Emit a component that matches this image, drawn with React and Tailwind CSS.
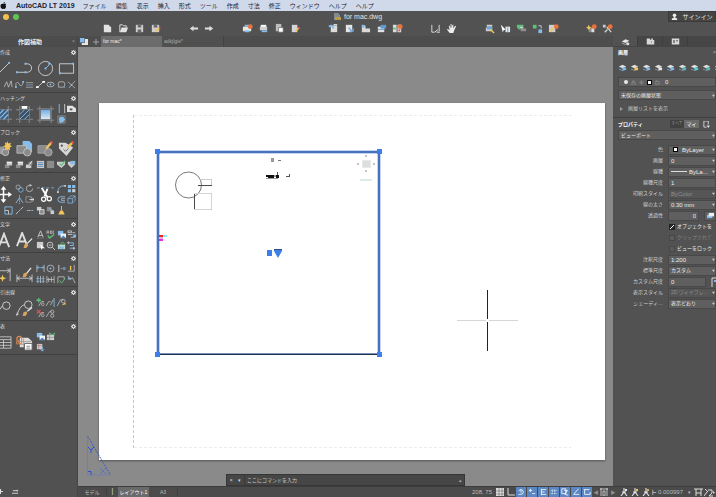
import clsx from 'clsx';

const G = '#cdcdcd'; // light strokes
const B = '#86bcea'; // accent blue
const O = '#e8743b'; // badge orange
const Y = '#f2c45a';
const N = '#5ec27c';
const D = '#8b8b8b';

// Small tool glyphs, drawn on a 10x10 grid
const SMALL = {
  spline: <path d="M0 8 3 2 5 8 8 1 9 8" stroke={G} fill="none" strokeWidth=".8" />,
  spline2: <><path d="M1 8V4Q3 1 5 5T9 3" stroke={G} fill="none" strokeWidth=".8" /><path d="M8 1h2v2H8zM0 7h2v2H0z" fill={B} /></>,
  mline: <><path d="M1 3h8M1 8h8" stroke={G} strokeWidth=".7" /><path d="M1 5.5h8" stroke={B} strokeWidth=".7" /></>,
  ray: <><path d="M2 8 8 2" stroke={G} /><path d="M0 7h3v2H0zM7 1h3v2H7z" fill="#fff" /></>,
  ellipse: <><ellipse cx="5" cy="5" rx="4" ry="2.6" stroke={G} fill="none" strokeWidth=".8" /><circle cx="5" cy="5" r="1" fill={B} /></>,
  roundrect: <><rect x="1.5" y="2" width="7" height="6" rx="2" stroke={G} fill="none" strokeWidth=".8" /><path d="M1 8h1M8 8h1" stroke={B} /></>,
  cross: <><path d="M1 2 9 9M2 9 9 1" stroke={G} strokeWidth=".7" /><circle cx="5" cy="5.4" r="1" fill={B} /></>,
  bars: <><path d="M2.5 0v10" stroke={B} /><path d="M8.5 0v10" stroke={G} /></>,
  tag: <><path d="M0 2h6l4 3v4H0z" fill="#e4e4e4" /><path d="M3 5h3v2H3z" fill="#555" /></>,
  bubble: <><path d="M1 1h8v8H1z" fill="none" stroke={D} /><path d="M3 2h4l2 3-2 3-4 1-1-4z" fill={B} /></>,
  blocks: <><path d="M1 5h5v4H1z" fill={D} /><path d="M3 2h6v4H3z" fill={G} /><path d="M3 2.500h6" stroke="#fff" /></>,
  blockPen: <><path d="M1 5h6v4H1z" fill={G} /><circle cx="6" cy="4" r="2.4" fill={D} /><path d="M5 5 8 1" stroke="#fff" /></>,
  list: <><path d="M1 1h8v8H1z" fill={G} /><path d="M2 3h6M2 5h6M2 7h6" stroke="#5285bd" /></>,
  fill: <path d="M1.5 1.5h7v7h-7z" fill={D} stroke="#aaa" strokeWidth=".6" />,
  check: <><path d="M0 2h9v3L5 9 0 5z" fill={G} /><path d="m3 4 2 2 4-5" stroke={N} fill="none" strokeWidth="1.4" /></>,
  checkBlue: <><path d="M1 2h8v3L5 9 1 5z" fill={G} /><path d="M4 1h5v4H4z" fill={B} /></>,
  sync: <><path d="M1 2h6M7 2v3H3M3 8h6" stroke={B} fill="none" /><path d="M2 4 0 2l2-2M7 6l2 2-2 2" fill={G} /></>,
  copy: <><circle cx="3.5" cy="3.5" r="2.4" stroke={G} fill="none" strokeWidth=".7" /><circle cx="6.5" cy="6.5" r="2.6" stroke={B} fill="none" strokeWidth=".8" /></>,
  rotate: <><path d="M8.5 5A3.5 3.5 0 1 1 5 1.5" stroke={G} fill="none" strokeWidth=".8" /><path d="M5 0v3l3-1.5z" fill={G} /></>,
  mirror: <><path d="M5 0v10" stroke={G} strokeWidth=".7" strokeDasharray="2 1" /><path d="M5 3 1 9M5 3l4 6" stroke={B} /></>,
  stretch: <><path d="M1 2h6v6H1z" stroke={G} fill="none" strokeDasharray="1 1" /><path d="M5 5h5M8 3l2 2-2 2" stroke="#fff" fill="none" strokeWidth=".8" /></>,
  arc: <><path d="M1 9Q1 2 8 2" stroke={B} fill="none" /><path d="M0 8h2v2H0zM8 1h2v2H8z" fill={G} /></>,
  array: <><path d="M1 1h3.5v3.5H1zM5.7 1h3.5v3.5H5.7zM1 5.7h3.5v3.5H1z" fill={B} /><path d="M5.7 5.7h3.5v3.5H5.7z" fill={G} /></>,
  offset: <><path d="M9 2H4a3 3 0 0 0 0 6h5" stroke={B} fill="none" /><path d="M9 4H5v2h4" stroke={G} fill="none" strokeWidth=".7" /></>,
  box: <path d="M1 4h5v5H1zM1 4l3-3h5v5L6 9M6 4l3-3" stroke={B} fill="none" strokeWidth=".8" />,
  scale: <><path d="M1 1h8v8H1z" stroke={B} fill="none" /><path d="M1 5h4v4" stroke={G} fill="none" /></>,
  trim: <><path d="M1 9 4 6M6 4l3-3" stroke={G} /><path d="m4 6 2-2" stroke={B} /></>,
  dash: <><path d="M2 5h2M7 5h2" stroke={B} /><path d="M4 4.500h2v1H4z" fill={G} /></>,
  swap: <><path d="M1 1h5v4H1z" fill={G} /><path d="M4 4h5v5H4z" fill={D} stroke="#fff" strokeWidth=".7" /></>,
  swapBlue: <><path d="M1 1h5v5H1z" fill={D} /><path d="M3 3q5 0 5 5" stroke={B} fill="none" /><path d="M5 5h4v4H5z" fill={G} /></>,
  broom: <><path d="M5 0v5" stroke={Y} /><path d="M3.5 5h3l2 4.500h-7z" fill={Y} /></>,
  textA: <><path d="M2 8 5 1l3 7M3 6h4" stroke={G} fill="none" /><path d="M1 9h8" stroke={D} strokeWidth=".7" /></>,
  spell: <><path d="M1 4V1h2v3M1 3h2M5 1h1.500v3H5zM9 1H8v3h1" stroke={G} fill="none" strokeWidth=".7" /><path d="m2 6 2 3 5-4" stroke={N} fill="none" strokeWidth="1.500" /></>,
  pictures: <><path d="M1 1h6v5H1z" fill={B} /><path d="M4 4h6v5H4z" fill="#f1f1f1" /><path d="m4 9 3-3 3 3z" fill="#4a86c6" /></>,
  convert: <><path d="M1 1h4v2H1zM6 3h3M1 5h5M4 8h5" stroke={G} fill="none" strokeWidth=".9" /><path d="M7 5h3v3H7z" fill={B} /></>,
  select: <><path d="M1 1h7v7H1z" fill={G} /><path d="m5 4 5 4H7l-1 2z" fill="#fff" /></>,
  search: <><circle cx="4.500" cy="4.500" r="3.200" stroke={G} fill="none" /><path d="m7 7 3 3M3 4.500h3" stroke={G} /></>,
  import: <><path d="M1 4h8v5H1z" fill="#c8dfd0" /><path d="m3 5 3-4 3 3" stroke={N} fill="none" /><path d="M2 6h6v3H2z" fill={B} /></>,
  dimLin: <><path d="M1 1v8M9 1v8" stroke={G} strokeWidth=".8" /><path d="M1 4h8M3 2.500 1 4l2 1.500M7 2.500 9 4 7 5.500" stroke={B} fill="none" strokeWidth=".8" /></>,
  dimRad: <><circle cx="5" cy="5" r="3.800" stroke={G} fill="none" strokeWidth=".8" /><circle cx="5" cy="5" r="1" fill={B} /></>,
  dimOrd: <><path d="M2 1v8" stroke={G} /><path d="M4 5h2M7 4h2v2H7z" stroke={B} fill="none" strokeWidth=".8" /></>,
  dimBase: <><path d="M8 1v7H1" stroke={G} fill="none" strokeWidth=".8" /><path d="M4 2v5" stroke={Y} strokeWidth="1.500" /></>,
  dimCont: <><path d="M2 1v8M5 1v8M8 1v8" stroke={G} strokeWidth=".8" /><path d="M0 4h10M0 7h10" stroke={B} strokeWidth=".7" /></>,
  dimSpace: <path d="M1 1v8M9 1v8M3 3v5M6 2v6M1 5h8" stroke={G} strokeWidth=".8" />,
  dimOk: <><path d="M1 9V2h7v3" stroke={G} fill="none" strokeWidth=".8" /><path d="m3 6 2 3 4-5" stroke={N} fill="none" /></>,
  dimJog: <><path d="M1 1 4 5 6 3l3 6" stroke={G} fill="none" strokeWidth=".8" /><path d="M1 3h3v2H1z" fill={B} /></>,
  leadAdd: <><path d="M3 0v5M.5 2.500h5" stroke={N} strokeWidth="1.400" /><path d="M3 9 6 4h3" stroke={G} fill="none" strokeWidth=".8" /><circle cx="7.500" cy="7" r="1.500" stroke={G} fill="none" strokeWidth=".7" /></>,
  leadDel: <><path d="m1 1 4 4M5 1 1 5" stroke="#e05151" strokeWidth="1.400" /><path d="M3 9 6 4h3" stroke={G} fill="none" strokeWidth=".8" /><circle cx="7.500" cy="7" r="1.500" stroke={G} fill="none" strokeWidth=".7" /></>,
  leadAlign: <><path d="m0 9 3-5h2M5 8l3-6" stroke={G} fill="none" strokeWidth=".8" /><path d="M9 0v10" stroke={B} /></>,
  leadJoin: <><path d="m0 9 4-7h3" stroke={G} fill="none" strokeWidth=".8" /><circle cx="7" cy="3.500" r="2" stroke={G} fill="none" strokeWidth=".8" /><path d="m5 8 4-3 1 2z" fill={Y} /></>,
  leadCol: <><path d="m0 9 4-6h2" stroke={G} fill="none" strokeWidth=".8" /><circle cx="7" cy="3" r="1.800" stroke={G} fill="none" strokeWidth=".8" /><circle cx="7" cy="7.500" r="1.800" stroke={G} fill="none" strokeWidth=".8" /></>,
  tblUp: <><path d="M1 3h8v6H1z" fill={G} /><path d="M1 6h8M4 3v6" stroke="#777" strokeWidth=".6" /><path d="M4 4V1l3 2 3-2v3" stroke={N} fill="none" /></>,
  tblDown: <><path d="M1 1h6v6H1z" fill={G} /><path d="M1 3h6M3 1v6" stroke="#a66" strokeWidth=".6" /><path d="M7 4v5L5 7M7 9l2-2" stroke={B} fill="none" /></>,
  gear: <><circle cx="5" cy="5" r="3" fill="none" stroke="#f0f0f0" strokeWidth="2.400" /><path d="M5 0v2M5 8v2M0 5h2M8 5h2M1.500 1.500l1.500 1.500M7 7l1.500 1.500M8.500 1.500 7 3M3 7 1.500 8.500" stroke="#f0f0f0" strokeWidth="1.600" /></>,
};

// Large tool glyphs, drawn on an 18x18 grid
const LARGE = {
  line: <><path d="M2 16 15 3" stroke={G} /><path d="M14 2h2v2h-2z" fill={B} /></>,
  pline: <><path d="M1 13h11a4.500 4.500 0 0 0 0-9h-2" stroke={G} fill="none" /><path d="M0 12h2v2H0zM9 3h2v2H9zM9 12h2v2H9z" fill={B} /></>,
  circle: <><circle cx="9" cy="9" r="7.500" stroke={G} fill="none" /><path d="m9 9 4-4" stroke={B} /><path d="M8 8h2v2H8zM12 3h2v2h-2z" fill={B} /></>,
  rect: <><path d="M1.500 4h15v10h-15z" stroke={G} fill="none" /><path d="M1 13h2v2H1zM15 3h2v2h-2z" fill={B} /></>,
  hatch: <><path d="M4 0v18M14 0v18M0 4h18M0 14h18" stroke={D} /><path d="M4 4h10v10H4z" fill="#3f5f80" /><path d="m4 9 5-5M4 14 14 4M9 14l5-5" stroke={B} strokeWidth="1.300" /></>,
  hatchTop: <><path d="M4 0v18M14 0v18M0 4h18M0 14h18" stroke={D} /><path d="M4 4h10v10H4z" fill="#3f4f62" /><path d="m4 9 5-5M4 14 14 4M9 14l5-5" stroke={B} /><path d="M6 0h6v3H6z" fill="#fff" /></>,
  gradient: <><defs><linearGradient id="grad" x2="0" y2="1"><stop stopColor="#6eaee6" /><stop offset="1" stopColor="#dfeaf5" /></linearGradient></defs><path d="M3 0v18M15 0v18M0 3h18M0 15h18" stroke={D} /><path d="M4 4h10v10H4z" fill="url(#grad)" /></>,
  blockNew: <><path d="M2 7h8v8H2z" fill="#9b9b9b" /><circle cx="11" cy="13" r="3.600" fill={D} stroke={G} strokeWidth=".8" /><path d="m13 1 1.200 2.800L17 3l-1 2.500L18 7l-2.500 1L16 11l-3-1.500L10.500 11l.5-3-2.500-1.500L11 5.500 10.500 2.500l2 1z" fill={Y} /></>,
  blockIns: <><path d="M7 1h7l3 3v9H7z" fill={B} /><path d="M1 6h10v8H1z" fill={D} stroke={G} strokeWidth=".8" /><circle cx="12" cy="13" r="4" fill={D} stroke={G} strokeWidth=".8" /></>,
  blockEdit: <><path d="M1 6h10v8H1z" fill={D} stroke="#aaa" strokeWidth=".8" /><circle cx="12" cy="13" r="4" fill={D} stroke="#bbb" strokeWidth=".8" /><path d="m10 9 5-6" stroke={Y} strokeWidth="2.500" /><path d="m14.500 3.500 1.500-2" stroke="#e25b45" strokeWidth="2.500" /></>,
  attr: <><path d="M1 3h7l8 5-7 9-8-8z" fill="#d8d8d8" /><circle cx="4" cy="6" r="1.200" fill="#555" /><path d="m6 10 2 2 3-3" stroke="#666" fill="none" /><path d="m10 8 5-5" stroke={Y} strokeWidth="2.500" /><path d="m14.500 3.500 1.500-2" stroke="#e25b45" strokeWidth="2.500" /></>,
  move: <><path d="M9 2v14M2 9h14" stroke="#fff" strokeWidth="1.600" /><path d="m9 0 3 4H6zM9 18l3-4H6zM0 9l4-3v6zM18 9l-4-3v6z" fill="#fff" /></>,
  scissors: <><path d="M0 2h18" stroke={B} strokeWidth=".8" strokeDasharray="3 2" /><path d="m5 2 6 10M11 3 8 11" stroke="#fff" strokeWidth="2" /><circle cx="7" cy="14" r="2.200" stroke="#fff" fill="none" strokeWidth="1.300" /><circle cx="13" cy="13.500" r="2.200" stroke="#fff" fill="none" strokeWidth="1.300" /></>,
  bigA: <path d="M4 16 9.500 2 15 16M6 11h7" stroke="#dedede" fill="none" strokeWidth="2" />,
  brushA: <><path d="M1 15 6.500 1 12 15M3 10h7" stroke="#dedede" fill="none" strokeWidth="2" /><path d="m12 12 5-5" stroke="#eee" strokeWidth="1.300" /><path d="m8 17 1-4 3-1 1 2-2 3z" fill="#d9a35f" /></>,
  dim: <><path d="M2 2v14M16 2v14M2 5h14M5 3 2 5l3 2M13 3l3 2-3 2" stroke={G} fill="none" strokeWidth=".9" /><path d="m8 9 1 3 3 1-3 1-1 3-1-3-3-1 3-1z" fill={Y} /></>,
  dimBrush: <><path d="M1 9v8M17 9v8M1 13h16M4 11l-3 2 3 2M14 11l3 2-3 2" stroke={G} fill="none" strokeWidth=".9" /><path d="m11 8 5-6" stroke="#eee" strokeWidth="1.300" /><path d="m7 12 1-4 3-1 1 2-2 3z" fill="#d9a35f" /></>,
  leader: <><path d="M2 14 8 6" stroke={G} /><circle cx="12" cy="6" r="4" stroke={G} fill="none" /></>,
  leadBrush: <><path d="M1 16Q4 6 9 5" stroke={G} fill="none" /><circle cx="13" cy="5" r="4" stroke={G} fill="none" /><path d="m0 17 1-4 2 2z" fill={G} /><path d="m12 12 5-4" stroke="#eee" strokeWidth="1.300" /><path d="m7 17 1-4 3-1 1 2-2 3z" fill="#d9a35f" /></>,
  table: <path d="M1 3h16v12H1zM1 6h16M1 9h16M1 12h16M9 6v9" stroke={G} fill="none" strokeWidth=".9" />,
  linkTable: <><path d="M4 4h9l4 4v6H4z" fill="#dedede" /><path d="M4 8h12M4 11h12M8 5v9" stroke="#999" strokeWidth=".8" /><path d="M1 11V5a2.500 2.500 0 0 1 5 0v4a1.500 1.500 0 0 1-3 0V6" stroke="#e08a4e" fill="none" strokeWidth="1.300" /><path d="M9 10h8v7H9z" fill="#fff" stroke="#666" /><path d="M11 13h4M11 15h4" stroke="#666" strokeWidth=".8" /></>,
};

// Toolbar glyphs, drawn on a 12x12 grid
const badge = <circle cx="9" cy="4" r="2.600" fill={O} />;
const BAR = {
  new: <path d="M2 2h5l3 3v5H2z" fill="#e2e2e2" />,
  open: <><path d="M2 10V2h3l1 1h3v2" stroke="#e2e2e2" fill="none" /><path d="m2 10 2-5h7l-2 5z" fill="#e2e2e2" /></>,
  save: <><path d="M2 2h8v8H2z" fill="#cfcfcf" /><path d="M4 2h4v3H4zM4 7h4v3H4z" fill="#6a6a6a" /></>,
  saveAs: <><path d="M2 2h8v8H2z" fill="#cfcfcf" /><path d="M4 2h4v3H4z" fill="#6a6a6a" /><path d="m6 9 4-3" stroke={Y} strokeWidth="2" /><path d="m10 6 1-1" stroke="#e25b45" strokeWidth="2" /></>,
  undo: <path d="m2 6 4-3v2h5v2H6v2z" fill="#dedede" />,
  redo: <path d="M10 6 6 3v2H1v2h5v2z" fill="#dedede" />,
  plot: <><path d="M1 4h9v5H1z" fill="#e8e8e8" /><path d="M3 2h5v2H3zM3 8h5v2H3z" fill={B} />{badge}</>,
  print: <><path d="M3 2h6v3H3z" fill="#fff" /><path d="M2 4h8v4H2z" fill="#cfcfcf" /><path d="M4 8h6v2H4z" fill={B} /></>,
  page: <><path d="M2 1h6v8H2z" fill="#bdbdbd" /><path d="M5 5h5v5H5z" fill="#fff" stroke="#666" strokeWidth=".7" /></>,
  pagePen: <><path d="M2 2h6v8H2z" fill="#d6d6d6" /><path d="m6 9 4-4" stroke={Y} strokeWidth="1.800" /><path d="m9 6 1-1" stroke="#e25b45" strokeWidth="2" /></>,
  sheet: <><path d="M3 3h7v7H3z" fill="#dcdcdc" /><path d="M10 2H6" stroke="#eee" strokeWidth="1.500" /><path d="M1 4q4-3 5 2" stroke={B} fill="none" strokeWidth="2" /></>,
  sheetIn: <><path d="M2 2h7v8H2z" fill="#e6e6e6" /><path d="m5 5 4 4M6 9h4V6" stroke="#6aa7dc" fill="none" strokeWidth="1.300" /></>,
  folder: <><path d="M2 2v8h9V6H6V3z" fill="#d9d9d9" /><path d="M2 2h3v3H2z" fill={B} /></>,
  refs: <><path d="M2 4h7v6H2z" fill="#e2e2e2" /><path d="M5 2h6v4H5z" fill="#5f9ad2" /><path d="M2 7h7" stroke="#5f9ad2" /></>,
  compare: <><path d="M1 2h4v8H1zM6 2h4v8H6z" fill="#dcdcdc" /><path d="M1 5h3v2H1z" fill={N} /><path d="M7 7h2v2H7z" fill="#e05151" />{badge}</>,
  region: <path d="M2 2v8h3M10 2v7M5 10l4-3M7 10h4" stroke="#e2e2e2" fill="none" />,
  hand: <path d="M4 11 1 7l1-.5L4 8 3 3h1l1 3V1h1v5l1-4h1v4l2-3 1 .5L9 8l-1 3z" fill="#ececec" />,
  props: <><path d="M3 2h6v2H3zM2 5h7v4H2z" fill="#cfcfcf" /><path d="M3 4h6v3H3z" fill="#6ba6db" /><path d="m7 7 4 4" stroke={Y} strokeWidth="1.500" /></>,
  quick: <><path d="m1 2 5 5-2 1-1 2z" fill="#fff" /><path d="M6 4h5v6H6z" fill="#e8e8e8" /><path d="M8 5h1v5H8z" fill="#58a0e0" /></>,
  group: <><path d="M1 2h7v2H4v4L1 5z" fill={N} /><path d="M5 6h6v3H5z" fill="#8e8e8e" /><path d="M4 4h4v2H4z" fill="#b9dcc4" /></>,
  ungroup: <><path d="M1 2h4v4H1z" fill={N} /><path d="M7 7h4v4H7z" fill={B} /><path d="M7 3h3v3" stroke={G} fill="none" /></>,
  measure: <><path d="M1 2h7v8H1z" fill="#cfcfcf" /><path d="m4 4 2 4-4 2z" fill={Y} />{badge}</>,
  star: <><path d="M3 5h6v5H3z" fill={D} /><path d="m3 2 1 2 2 1-2 1-1 2-1-2-2-1 2-1z" fill={Y} /><path d="M6 6h3v4H6z" fill="#ddd" />{badge}</>,
  tools: <><path d="m3 10 3-3M6 5l4 5" stroke="#cfcfcf" strokeWidth="1.500" /><path d="M1 2h3v3H1zM5 4h2v2H5z" fill="#ccc" />{badge}</>,
  layer: <><path d="m1 6 5-3 5 2-5 3z" fill="#e6e6e6" /><path d="m1 8 5 2 2-2" stroke="#bbb" fill="none" /><circle cx="9" cy="9" r="2" fill="#ddd" /></>,
  blocksTab: <><path d="M1 2h4l1 2h5v6H1z" fill="#d9d9d9" /><path d="M7 2h2v2H7z" fill="#eee" /><path d="M7 6h1v2H7z" fill="#777" /></>,
  sheetTab: <><path d="M1 2h10v8H1z" fill="#d9d9d9" /><path d="M3 4h2v4H3zM7 4h2v2H7z" fill="#666" /></>,
};

const TOOLBAR = [
  ['new', 'open', 'save', 'saveAs'],
  ['undo', 'redo'],
  ['plot', 'print', 'page', 'pagePen'],
  ['sheet', 'sheetIn', 'folder', 'refs', 'compare'],
  ['region', 'hand'],
  ['props', 'quick', 'group', 'ungroup', 'measure'],
  ['star', 'tools'],
];

const MENUS = ['ファイル', '編集', '表示', '挿入', '形式', 'ツール', '作成', '寸法', '修正', 'ウィンドウ', 'ヘルプ', 'ヘルプ'];

// "+name" takes a double cell, "" leaves a single cell empty
const SECTIONS = [
  { title: '作成', tools: ['+line', '+pline', '+circle', '+rect', '', 'spline', 'spline2', 'mline', 'ray', 'ellipse', 'roundrect', 'cross'] },
  { title: 'ハッチング', tools: ['+hatch', '+hatchTop', '+gradient', 'bars', 'tag', 'bubble'] },
  { title: 'ブロック', tools: ['+blockNew', '+blockIns', '+blockEdit', '+attr', '', 'blocks', 'blocks', 'blockPen', 'list', 'fill', 'check', 'checkBlue'] },
  { title: '修正', tools: ['+move', 'copy', 'rotate', '+scissors', 'arc', 'array', 'mirror', 'stretch', 'offset', 'box', '', 'scale', 'trim', 'dash', 'swap', 'swapBlue', 'broom'] },
  { title: '文字', tools: ['+bigA', '+brushA', 'textA', 'spell', 'pictures', 'convert', 'select', 'search', 'import', 'sync'] },
  { title: '寸法', tools: ['+dim', '+dimBrush', 'dimLin', 'dimRad', 'dimOrd', 'dimBase', 'dimCont', 'dimSpace', 'dimOk', 'dimJog'] },
  { title: '引出線', tools: ['+leader', '+leadBrush', 'leadAdd', 'leadAlign', 'leadJoin', '', 'leadDel', 'leadCol'] },
  { title: '表', tools: ['+table', '+linkTable', 'pictures', 'tblUp', '', '', 'tblDown'] },
];

const LAYER_COLORS = ['#7db8ec', '#f2c45a', '#7db8ec', '#e6e6e6', '#7db8ec', '#4fb9c4', '#4fd0dc', '#4fb9c4', '#f2c45a'];

function Tool({ name }) {
  if (!name) return <span />;
  const big = name.startsWith('+');
  const key = big ? name.slice(1) : name;
  return (
    <button aria-label={key} className={clsx('flex items-center justify-center', big && 'col-span-2 row-span-2')}>
      <svg viewBox={big ? '0 0 18 18' : '0 0 10 10'} className={big ? 'size-[17px]' : 'size-[9px]'}>
        {big ? LARGE[key] : SMALL[key]}
      </svg>
    </button>
  );
}

function ToolPalette() {
  return (
    <aside className="flex w-[78px] shrink-0 flex-col overflow-hidden border-r border-[#454545] bg-[#515151]">
      <div className="flex h-[11px] shrink-0 items-center justify-between bg-[#4c4c4c] pr-0.5 pl-[18px]">
        <h2 className="text-[6px] leading-none font-bold text-[#ececec]">作図補助</h2>
        <button aria-label="閉じる" className="text-[5px] leading-none text-[#999]">×</button>
      </div>
      <div className="-ml-[7px] w-[84px]">
        {SECTIONS.map(({ title, tools }) => (
          <section key={title} className="border-b border-[#404040] pb-px">
            <div className="flex h-2.5 items-center justify-between pr-px pl-[7px]">
              <h3 className="text-[5px] leading-[7px] text-[#dadada]">{title}</h3>
              <button aria-label={`${title}の設定`}>
                <svg viewBox="0 0 10 10" className="size-[5px]">{SMALL.gear}</svg>
              </button>
            </div>
            <div className="grid min-h-[22px] auto-rows-[11px] grid-cols-8">
              {tools.map((t, i) => <Tool key={i} name={t} />)}
            </div>
            {tools.length > 10 && <div className="h-px" />}
          </section>
        ))}
      </div>
      <div className="mt-auto flex h-[11px] items-center gap-[9px]">
        <button aria-label="追加">
          <svg viewBox="0 0 3 7" className="h-[7px] w-[3px]"><path d="M0 3.500h3M.5 1v5" stroke="#ddd" /></svg>
        </button>
        <button aria-label="一覧">
          <svg viewBox="0 0 8 8" className="size-[7px]"><path d="M1 3h6M0 6h7M6 2v2" stroke="#ddd" /></svg>
        </button>
      </div>
    </aside>
  );
}

function Canvas() {
  return (
    <main className="relative flex min-h-0 flex-1 bg-[#8a8a8a] pt-14 pr-2 pb-[26px] pl-[21px]">
      <div className="min-w-0 flex-1 bg-white shadow-[0_1px_2px_#555]">
        <svg viewBox="0 0 506 357" preserveAspectRatio="xMinYMin meet" className="size-full" shapeRendering="crispEdges">
          {/* Printable area */}
          <path d="M34.500 12v333" stroke="#c9c9c9" strokeDasharray="3 2" />
          <path d="M35 12.500h437M35 344.500h437" stroke="#ececec" strokeDasharray="3 2" />

          {/* Viewport frame and grips */}
          <path d="M59 49v202M280 49v202M59 49h222" stroke="#c3d3f0" strokeWidth="4" />
          <path d="M59 251V49h221v202" fill="none" stroke="#4672c0" strokeWidth="2" />
          <path d="M58 251.500h223" stroke="#1d2f4b" strokeWidth="1" />
          <path d="M58 250.500h223" stroke="#7b93bb" strokeWidth="1" />
          <path d="M56 46h5v5h-5zM278 46h5v5h-5zM56 249h5v5h-5zM278 249h5v5h-5z" fill="#3c7eea" />

          {/* Model geometry */}
          <circle cx="89.500" cy="82" r="13" fill="none" stroke="#555" strokeWidth=".8" shapeRendering="auto" />
          <path d="M101 76.500h11.500v6" fill="none" stroke="#ccc" />
          <path d="M99 82.500h14M95.500 90v16" stroke="#4a4a4a" />
          <path d="M95 90.500h17.500v16H95" fill="none" stroke="#d4d4d4" />
          <path d="M172 55h3v4h-3z" fill="#999" />
          <path d="M179 57.500h3" stroke="#777" />
          <path d="M167 72h8v3h-6v-1h-2zM177 72h3v3h-3z" fill="#111" />
          <path d="M175 72h2v2h-2zM167 75h12v1h-12z" fill="#999" />
          <path d="M178.500 69v3" stroke="#555" />
          <path d="M187 73.500h4M190.500 71v3" stroke="#555" />

          {/* View cube */}
          <path d="M263 57h8v7h-8z" fill="#dcdfdf" stroke="#e9e9e9" />
          <path d="M266 52h2v2h-2zM266 67h2v2h-2zM258 60h2v2h-2zM274 60h2v2h-2z" fill="#c4c4c4" />
          <path d="M261 77h12" stroke="#dcebea" strokeWidth="2" />

          <path d="M60 132h4v2h-4z" fill="#f0271c" />
          <path d="M60 134h4v2h-4z" fill="#e8aee2" />
          <path d="M60 136h4v2h-4z" fill="#ee27e5" />
          <path d="M64 132h4v2h-4z" fill="#7df3f5" />
          <path d="M168 147h5v6h-5z" fill="#3c7eea" />
          <path d="M175 146h8v2l-4 7-4-7z" fill="#3c7eea" shapeRendering="auto" />
          <path d="M175 146.500h8" stroke="#2d4d83" />

          {/* Crosshair */}
          <path d="M388.500 187v29M388.500 219v29" stroke="#222" />
          <path d="M358 217.500h29M390 217.500h29" stroke="#d6d6d2" />
        </svg>
      </div>

      {/* UCS icon */}
      <svg viewBox="0 0 28 46" className="absolute bottom-[7px] left-2 h-[46px] w-7" fill="none">
        <path d="M1.500 3v39H24" stroke="#6b7fb4" strokeWidth=".8" />
        <path d="m1.500 3 23 39" stroke="#3c5dc6" strokeDasharray="2 1" />
        <path d="M2 38.500h3V42" stroke="#2452d8" />
        <path d="m2 14 3 3 3-3M5 17v3" stroke="#2452d8" />
        <path d="m14 35 6 6M20 35l-6 6" stroke="#5472bf" strokeWidth=".8" />
      </svg>

      {/* Command line */}
      <form className="absolute right-[148px] bottom-0 left-[148px] flex h-3 items-center border border-[#363636] bg-[#464646]" onSubmit={(e) => e.preventDefault()}>
        <span className="flex h-full w-[18px] items-center justify-around border-r border-[#393939] text-[5px] leading-none text-[#ddd]">
          <button type="button" aria-label="閉じる">×</button>
          <button type="button" aria-label="履歴">▾</button>
        </span>
        <input aria-label="コマンド" placeholder="ここにコマンドを入力" className="h-full min-w-0 flex-1 bg-transparent px-0.5 text-[5px] leading-none text-[#eee] outline-none placeholder:text-[#c8c8c8]" />
        <span className="pr-0.5 text-[5px] leading-none text-[#aaa]">▴</span>
      </form>
    </main>
  );
}

function Workspace() {
  return (
    <div className="flex min-w-0 flex-1 flex-col">
      <nav className="flex h-[11px] shrink-0 items-stretch bg-[#4d4d4d] text-[5px] leading-none text-[#aaa]">
        <button aria-label="スタート" className="flex w-3 items-center justify-center">
          <svg viewBox="0 0 9 9" className="size-2"><path d="M0 0h5v5H0z" fill={B} /><path d="M5.500 1H9v7H2V5.500h3.500z" fill="#e6e6e6" /></svg>
        </button>
        <button aria-label="新しいタブ" className="flex w-[11px] items-center justify-center">
          <svg viewBox="0 0 6 6" className="size-1.5"><path d="M3 0v6M0 3h6" stroke="#b5b5b5" strokeWidth=".8" /></svg>
        </button>
        <button className="w-[61px] bg-[#6c6c6c] pl-0.5 text-left text-[#eee]">for mac*</button>
        <button className="w-[62px] border-r border-[#424242] bg-[#505050] pl-0.5 text-left">adkjlgie*</button>
      </nav>
      <Canvas />
    </div>
  );
}

const field = 'flex h-2.5 items-center border border-[#484848] bg-[#5f5f5f] text-[6px] leading-none text-[#ececec]';

function Dropdown({ id, label, value, dim, swatch, line, jp, disabled }) {
  return (
    <span className={clsx(field, 'min-w-0 flex-1 gap-0.5 pl-0.5', disabled && 'bg-[#565656]')}>
      {swatch && <i className="mx-0.5 size-[5px] shrink-0 border border-black bg-white" />}
      {line && <i className="h-px w-4 shrink-0 bg-[#ddd]" />}
      <select id={id} aria-label={label} disabled={disabled} className={clsx('h-full min-w-0 flex-1 appearance-none truncate bg-transparent leading-none outline-none disabled:opacity-100', jp ? 'text-[5px]' : 'text-[6px]', dim && 'text-[#8e8e8e]')}>
        <option>{value}</option>
      </select>
      <svg viewBox="0 0 4 4" className="size-[3px] shrink-0"><path d="M0 1h4L2 4z" fill="#ccc" /></svg>
    </span>
  );
}

function Row({ label, id, children }) {
  return (
    <div className="flex h-[11px] items-center gap-[5px]">
      <label htmlFor={id} className="w-[50px] shrink-0 text-right text-[5px] leading-[7px] whitespace-nowrap text-[#d0d0d0]">{label}</label>
      {children}
    </div>
  );
}

function Check({ label, checked, disabled }) {
  return (
    <label className={clsx('ml-[56px] flex h-[11px] items-center gap-0.5 text-[5px] leading-[7px] whitespace-nowrap', disabled ? 'text-[#858585]' : 'text-[#ececec]')}>
      <input
        type="checkbox"
        defaultChecked={checked}
        disabled={disabled}
        className="size-1.5 shrink-0 appearance-none border border-[#474747] bg-[#5b5b5b] checked:border-[#222] checked:bg-[#2b2b2b] checked:bg-[linear-gradient(135deg,transparent_45%,#fff_45%,#fff_60%,transparent_60%)]"
      />
      {label}
    </label>
  );
}

function Inspector() {
  return (
    <aside className="flex w-[103px] shrink-0 flex-col overflow-hidden bg-[#525252]">
      <div className="flex h-[11px] shrink-0 border-b border-[#454545] bg-[#464646]">
        {['layer', 'blocksTab', 'sheetTab'].map((n, i) => (
          <button key={n} aria-label={n} className={clsx('flex w-[25px] items-center justify-center border-r border-[#3e3e3e]', i === 0 && 'bg-[#525252]')}>
            <svg viewBox="0 0 12 12" className="size-[9px]">{BAR[n]}</svg>
          </button>
        ))}
      </div>

      {/* Layers */}
      <section className="border-b border-[#3f3f3f] pl-[5px]">
        <div className="flex h-[10px] items-center justify-between">
          <h2 className="text-[5px] leading-[7px] font-bold text-white">画層</h2>
          <span className="text-[5px] leading-none text-[#aaa]">×</span>
        </div>
        <div className="flex h-5 items-center">
          {LAYER_COLORS.map((c, i) => (
            <button key={i} aria-label={`画層ツール ${i + 1}`} className="flex w-3 shrink-0 items-center">
              <svg viewBox="0 0 10 10" className="size-[9px]">
                <path d="m1 4 4-2 4 2-4 2z" fill="#dedede" />
                <path d="m1 6 4 2 4-2v1L5 9 1 7z" fill={i % 4 ? '#9aa0a6' : c} />
                <path d="M5 5h4v3H5z" fill={c} />
              </svg>
            </button>
          ))}
        </div>
        <div className={clsx(field, 'gap-[3px] pl-[5px]')}>
          <i className="size-1 rounded-full bg-[#e8e8e8]" />
          <svg viewBox="0 0 6 6" className="size-[5px]"><path d="M1 3h4v3H1zM2 3V1h2v2" fill="none" stroke="#888" /></svg>
          <svg viewBox="0 0 6 6" className="size-[5px]"><path d="M3 0v6M0 3h6M1 1l4 4M5 1 1 5" stroke="#888" strokeWidth=".7" /></svg>
          <i className="size-[5px] border border-black bg-white" />
          <svg viewBox="0 0 6 6" className="size-[5px]"><path d="M0 2h5v3H0zM2 0v2" fill="none" stroke="#888" /></svg>
          <span className="ml-0.5">0</span>
        </div>
        <div className="mt-[3px] flex">
          <Dropdown label="画層状態" value="未保存の画層状態" jp />
        </div>
        <button className="flex h-[17px] items-center gap-1 text-[5px] leading-[7px] text-[#c8c8c8]">
          <svg viewBox="0 0 4 4" className="ml-0.5 size-1"><path d="M0 0v4l3-2z" fill="#999" /></svg>
          画層リストを表示
        </button>
      </section>

      {/* Properties */}
      <section>
        <div className="flex h-3 items-center pl-[5px]">
          <h2 className="w-[52px] text-[5px] leading-[7px] font-bold text-white">プロパティ</h2>
          <button className="h-2 w-[14px] bg-[#414141] text-[4px] leading-none text-[#909090]">すべて</button>
          <button className="h-2 w-[15px] bg-[#6b6b6b] text-[5px] leading-none text-white">マイ</button>
          <svg viewBox="0 0 8 8" className="ml-1 size-[7px]"><path d="M1 0h5v4M1 0v7h3" fill="none" stroke="#ddd" /><path d="M4 5h4L6 8z" fill="#ddd" /></svg>
        </div>
        <div className="flex pb-1 pl-[5px]">
          <Dropdown label="オブジェクトの種類" value="ビューポート" jp />
        </div>
        <Row label="色" id="color"><Dropdown id="color" value="ByLayer" swatch /></Row>
        <Row label="画層" id="layer"><Dropdown id="layer" value="0" /></Row>
        <Row label="線種" id="ltype"><Dropdown id="ltype" value="ByLa..." line /></Row>
        <Row label="線種尺度" id="lscale"><input id="lscale" defaultValue="1" className={clsx(field, 'min-w-0 flex-1 px-0.5')} /></Row>
        <Row label="印刷スタイル" id="pstyle"><Dropdown id="pstyle" value="ByColor" dim disabled /></Row>
        <Row label="線の太さ" id="weight"><Dropdown id="weight" value="0.30 mm" /></Row>
        <Row label="透過性" id="alpha">
          <input id="alpha" defaultValue="0" className={clsx(field, 'w-[31px] px-0.5 text-right')} />
          <button aria-label="画層の透過性" className={clsx(field, 'flex-1 justify-center')}>
            <svg viewBox="0 0 8 8" className="size-[7px]"><path d="M0 3h6v4H0z" fill={B} /><path d="M2 1h6v4H2z" fill="#eee" /></svg>
          </button>
        </Row>
        <Check label="オブジェクトを" checked />
        <Check label="クリップされて" disabled />
        <Check label="ビューをロック" />
        <Row label="注釈尺度" id="ascale"><Dropdown id="ascale" value="1:200" /></Row>
        <Row label="標準尺度" id="sscale"><Dropdown id="sscale" value="カスタム" jp /></Row>
        <Row label="カスタム尺度" id="cscale">
          <input id="cscale" defaultValue="0" className={clsx(field, 'w-[38px] px-0.5')} />
          <svg viewBox="0 0 8 10" className="h-2.5 w-2 shrink-0"><path d="M1 10V1h7" fill="none" stroke="#ddd" /><path d="M3 4h5" stroke={B} strokeWidth="2" /></svg>
        </Row>
        <Row label="表示スタイル" id="vstyle"><Dropdown id="vstyle" value="2D ワイヤフレ…" dim jp disabled /></Row>
        <Row label="シェーディ…" id="shade"><Dropdown id="shade" value="表示どおり" jp /></Row>
      </section>
    </aside>
  );
}

const SNAPS = {
  polar: <path d="M2 4a3 3 0 1 1 3 4H2M5 2v4" />,
  dyn: <path d="M3 1v4M1 3h4M5 7h4" />,
  weight: <path d="M3 1v8M3 2h6M3 5h4M3 8h6" />,
  trans: <path d="M1 3h8M1 7h8M3 2v6M6 2v6" strokeDasharray="1 1" />,
  cycle: <path d="M1 1h5v6H1zM4 3h4l-3 5 4 1" />,
  angle: <path d="M8 1 2 8h7" />,
  track: <path d="M1 2h7M2 2v6h7V5" />,
};

function StatusBar() {
  return (
    <footer className="flex h-[11px] shrink-0 items-stretch border-t border-[#3d3d3d] bg-[#4b4b4b] text-[5px] leading-none text-[#bdbdbd]">
      <button className="w-[29px] border-r border-[#404040]">モデル</button>
      <span className="w-[11px] text-center text-[7px] leading-none text-[#ddd]">|</span>
      <button className="w-[31px] bg-[#6a6a6a] text-white">レイアウト1</button>
      <button className="w-[29px] border-r border-[#404040]">A3</button>
      <div className="ml-auto flex items-center">
        <span className="pr-0.5 text-[6px] leading-none">208, 75</span>
        <button aria-label="グリッド" className="flex w-[11px] justify-center">
          <svg viewBox="0 0 8 8" className="size-2"><path d="M0 0h8v8H0z" fill="#ddd" /><path d="M0 3h8M0 6h8M3 0v8M6 0v8" stroke="#777" strokeWidth=".7" /></svg>
        </button>
        <button aria-label="直交モード" className="flex w-[11px] justify-center">
          <svg viewBox="0 0 8 8" className="size-2"><path d="M1 0v7h7" stroke="#ddd" fill="none" /></svg>
        </button>
        <div className="flex gap-px">
          {Object.entries(SNAPS).map(([name, path]) => (
            <button key={name} aria-label={name} className="flex h-2.5 w-2.5 items-center justify-center bg-[#5b88c4]">
              <svg viewBox="0 0 10 10" className="size-2" fill="none" stroke="#fff">{path}</svg>
            </button>
          ))}
        </div>
        <span className="w-2 text-center text-[#909090]">◀</span>
        <svg viewBox="0 0 8 8" className="size-2"><path d="M1 0v8M0 1h8M7 0v8M3 3h2v5H3z" stroke="#ddd" fill="none" strokeWidth=".8" /></svg>
        <span className="w-2.5 text-center text-[#909090]">▶</span>
        {['#e8e8e8', '#f2c45a', '#e9ab55'].map((c) => (
          <button key={c} aria-label={`注釈 ${c}`} className="flex w-[11px] justify-center">
            <svg viewBox="0 0 8 8" className="size-2"><path d="M4 0v4L1 8M4 4l3 4M2 4h4" stroke="#e4e4e4" fill="none" strokeWidth="1.100" /><path d="M5 1h2v2H5z" fill={c} /></svg>
          </button>
        ))}
        <svg viewBox="0 0 8 8" className="size-[7px]"><path d="M2 1v6M2 4h4" stroke="#bbb" fill="none" /></svg>
        <label className="flex items-center">
          <span className="sr-only">尺度</span>
          <select className="w-[30px] appearance-none bg-transparent text-[6px] leading-none outline-none">
            <option>0.000997</option>
          </select>
          <span className="w-1">▾</span>
        </label>
        <svg viewBox="0 0 9 9" className="ml-0.5 size-[9px]"><path d="M0 1h9M2 1v7M7 1v7M2 5h5" stroke="#ddd" fill="none" /></svg>
        <svg viewBox="0 0 9 9" className="ml-px size-[9px]"><path d="m0 8 3-4M1 1l3 3M4 2h4v3L5 8h4" stroke="#ddd" fill="none" /></svg>
        <svg viewBox="0 0 3 5" className="h-[5px] w-[3px]"><path d="M0 1v3l2-1.500z" fill="#ccc" /></svg>
      </div>
    </footer>
  );
}

export default function App() {
  return (
    <div className="flex h-screen flex-col overflow-hidden bg-[#525252] font-['Liberation_Sans','Noto_Sans_CJK_JP',sans-serif]">
      <header className="flex h-[11px] shrink-0 items-center bg-[#d0d9ea] text-[6px] leading-none text-[#1c2230]">
        <svg viewBox="0 0 8 8" className="size-[7px]"><path d="M4 2Q6 1 7 2.500q-1.500 1 0 2.700Q6.500 8 5 8L3.700 7.700 2.500 8Q.5 7 .5 4.500T3 2zM4 1.500Q4 0 5.500 0 5.500 1.500 4 1.500" fill="#111" /></svg>
        <strong className="pl-[9px] text-[7px] leading-none whitespace-nowrap">AutoCAD LT 2019</strong>
        <nav className="flex gap-[9px] pl-2 whitespace-nowrap">
          {MENUS.map((m, i) => <button key={i}>{m}</button>)}
        </nav>
      </header>

      <div className="relative h-[25px] shrink-0">
        <div className="flex h-[11px] items-center justify-center gap-[3px] text-[7px] leading-none text-[#e2e2e2]">
          <svg viewBox="0 0 7 7" className="size-[7px]"><path d="M0 0h4l2 2v5H0z" fill="#808b96" /><path d="M1 4h6v3H1z" fill="#b89b48" /></svg>
          for mac.dwg
        </div>
        <div className="absolute top-0 left-[3px] flex h-[11px] items-center gap-1">
          <button aria-label="しまう" className="size-1.5 rounded-full bg-[#f5bf4f]" />
          <button aria-label="最大化" className="size-1.5 rounded-full bg-[#5fc454]" />
        </div>
        <button className="absolute top-0 right-0 flex h-[11px] w-12 items-center justify-center gap-1 border border-[#3a3a3a] bg-[#454545] text-[6px] leading-none whitespace-nowrap text-[#e8e8e8]">
          <svg viewBox="0 0 8 8" className="size-[7px]"><circle cx="4" cy="2.500" r="2" fill="#eee" /><path d="M3 4h2v2H3zM1 8V6h6v2z" fill="#eee" /></svg>
          サインイン
        </button>
        <div className="flex h-3 items-center gap-[22px] pl-[99px]">
          {TOOLBAR.map((group, i) => (
            <div key={i} className="flex">
              {group.map((n) => (
                <button key={n} aria-label={n} className="flex w-4 justify-center">
                  <svg viewBox="0 0 12 12" className="size-[11px]">{BAR[n]}</svg>
                </button>
              ))}
            </div>
          ))}
        </div>
      </div>

      <div className="flex min-h-0 flex-1">
        <ToolPalette />
        <div className="flex min-w-0 flex-1 flex-col">
          <div className="flex min-h-0 flex-1">
            <Workspace />
            <Inspector />
          </div>
          <StatusBar />
        </div>
      </div>
    </div>
  );
}
